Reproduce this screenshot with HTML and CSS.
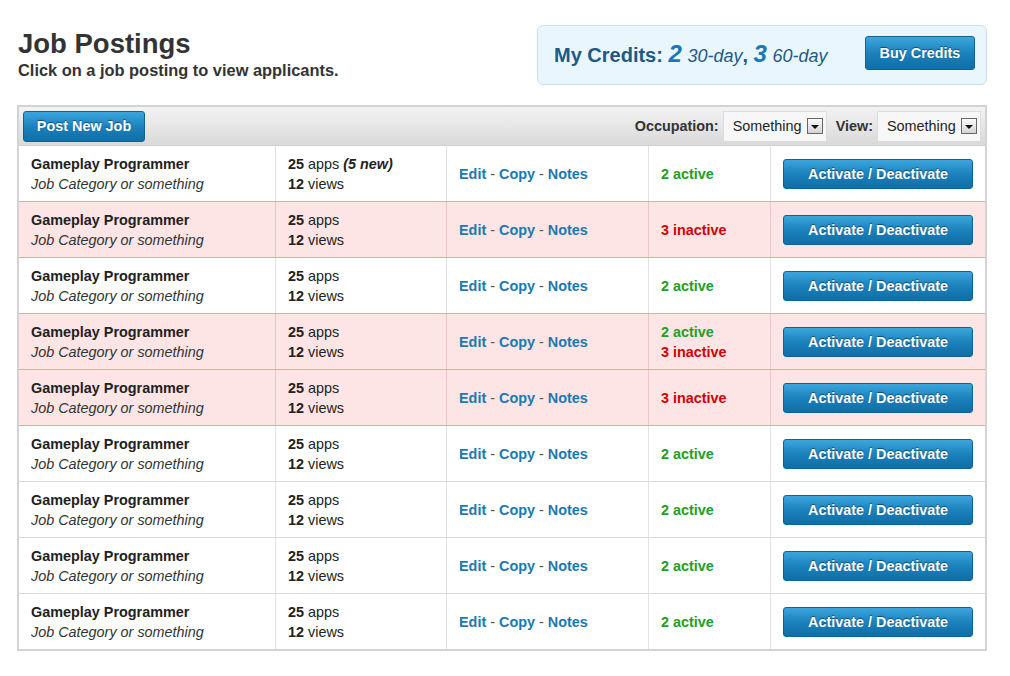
FILE: index.html
```html
<!DOCTYPE html>
<html>
<head>
<meta charset="utf-8">
<link rel="stylesheet" href="styles.css">
</head>
<body>
<div class="page">
  <div class="top">
    <div class="heading">
      <h1 class="title">Job Postings</h1>
      <p class="subtitle">Click on a job posting to view applicants.</p>
    </div>
    <div class="credits">
      <div class="credits-text">My Credits: <span class="num">2</span> <span class="unit">30-day</span>, <span class="num">3</span> <span class="unit">60-day</span></div>
      <button class="btn btn-buy">Buy Credits</button>
    </div>
  </div>

  <div class="panel">
    <div class="toolbar">
      <button class="btn btn-post">Post New Job</button>
      <div class="filters">
        <span class="flabel">Occupation:</span>
        <span class="select">Something<span class="arrow"></span></span>
        <span class="flabel">View:</span>
        <span class="select">Something<span class="arrow"></span></span>
      </div>
    </div>

    <div class="row">
      <div class="cell c1"><b>Gameplay Programmer</b><i>Job Category or something</i></div>
      <div class="cell c2"><span><b>25</b> apps <b class="new">(5 new)</b></span><span><b>12</b> views</span></div>
      <div class="cell c3"><span><a>Edit</a> - <a>Copy</a> - <a>Notes</a></span></div>
      <div class="cell c4"><span class="active">2 active</span></div>
      <div class="cell c5"><button class="btn btn-act">Activate / Deactivate</button></div>
    </div>
    <div class="row pink">
      <div class="cell c1"><b>Gameplay Programmer</b><i>Job Category or something</i></div>
      <div class="cell c2"><span><b>25</b> apps</span><span><b>12</b> views</span></div>
      <div class="cell c3"><span><a>Edit</a> - <a>Copy</a> - <a>Notes</a></span></div>
      <div class="cell c4"><span class="inactive">3 inactive</span></div>
      <div class="cell c5"><button class="btn btn-act">Activate / Deactivate</button></div>
    </div>
    <div class="row">
      <div class="cell c1"><b>Gameplay Programmer</b><i>Job Category or something</i></div>
      <div class="cell c2"><span><b>25</b> apps</span><span><b>12</b> views</span></div>
      <div class="cell c3"><span><a>Edit</a> - <a>Copy</a> - <a>Notes</a></span></div>
      <div class="cell c4"><span class="active">2 active</span></div>
      <div class="cell c5"><button class="btn btn-act">Activate / Deactivate</button></div>
    </div>
    <div class="row pink">
      <div class="cell c1"><b>Gameplay Programmer</b><i>Job Category or something</i></div>
      <div class="cell c2"><span><b>25</b> apps</span><span><b>12</b> views</span></div>
      <div class="cell c3"><span><a>Edit</a> - <a>Copy</a> - <a>Notes</a></span></div>
      <div class="cell c4"><span class="active">2 active</span><span class="inactive">3 inactive</span></div>
      <div class="cell c5"><button class="btn btn-act">Activate / Deactivate</button></div>
    </div>
    <div class="row pink">
      <div class="cell c1"><b>Gameplay Programmer</b><i>Job Category or something</i></div>
      <div class="cell c2"><span><b>25</b> apps</span><span><b>12</b> views</span></div>
      <div class="cell c3"><span><a>Edit</a> - <a>Copy</a> - <a>Notes</a></span></div>
      <div class="cell c4"><span class="inactive">3 inactive</span></div>
      <div class="cell c5"><button class="btn btn-act">Activate / Deactivate</button></div>
    </div>
    <div class="row">
      <div class="cell c1"><b>Gameplay Programmer</b><i>Job Category or something</i></div>
      <div class="cell c2"><span><b>25</b> apps</span><span><b>12</b> views</span></div>
      <div class="cell c3"><span><a>Edit</a> - <a>Copy</a> - <a>Notes</a></span></div>
      <div class="cell c4"><span class="active">2 active</span></div>
      <div class="cell c5"><button class="btn btn-act">Activate / Deactivate</button></div>
    </div>
    <div class="row">
      <div class="cell c1"><b>Gameplay Programmer</b><i>Job Category or something</i></div>
      <div class="cell c2"><span><b>25</b> apps</span><span><b>12</b> views</span></div>
      <div class="cell c3"><span><a>Edit</a> - <a>Copy</a> - <a>Notes</a></span></div>
      <div class="cell c4"><span class="active">2 active</span></div>
      <div class="cell c5"><button class="btn btn-act">Activate / Deactivate</button></div>
    </div>
    <div class="row">
      <div class="cell c1"><b>Gameplay Programmer</b><i>Job Category or something</i></div>
      <div class="cell c2"><span><b>25</b> apps</span><span><b>12</b> views</span></div>
      <div class="cell c3"><span><a>Edit</a> - <a>Copy</a> - <a>Notes</a></span></div>
      <div class="cell c4"><span class="active">2 active</span></div>
      <div class="cell c5"><button class="btn btn-act">Activate / Deactivate</button></div>
    </div>
    <div class="row">
      <div class="cell c1"><b>Gameplay Programmer</b><i>Job Category or something</i></div>
      <div class="cell c2"><span><b>25</b> apps</span><span><b>12</b> views</span></div>
      <div class="cell c3"><span><a>Edit</a> - <a>Copy</a> - <a>Notes</a></span></div>
      <div class="cell c4"><span class="active">2 active</span></div>
      <div class="cell c5"><button class="btn btn-act">Activate / Deactivate</button></div>
    </div>
  </div>
</div>
</body>
</html>
```

FILE: styles.css
```css
* { box-sizing: border-box; }
html, body { margin: 0; padding: 0; background: #fff; }
body {
  font-family: "Liberation Sans", Arial, sans-serif;
  font-size: 14.4px;
  color: #222;
}
.page {
  padding: 25px 0 0 17px;
  width: 987px;
}
.top {
  display: flex;
  justify-content: space-between;
  align-items: flex-start;
  height: 80px;
}
.heading { padding: 3px 0 0 1px; }
.title {
  margin: 0;
  font-size: 27.5px;
  line-height: 31px;
  font-weight: bold;
  color: #333;
}
.subtitle {
  margin: 0;
  padding-top: 2px;
  font-size: 16.4px;
  line-height: 19px;
  font-weight: bold;
  color: #333;
}
.credits {
  width: 450px;
  height: 60px;
  background: #eaf6fd;
  border: 1px solid #c4e2f1;
  border-radius: 6px;
  display: flex;
  align-items: center;
  justify-content: space-between;
  padding: 0 11px 0 16px;
}
.credits-text {
  font-size: 20px;
  font-weight: bold;
  color: #1d5a85;
  padding-bottom: 2px;
}
.credits-text .num {
  font-size: 24px;
  font-style: italic;
  color: #1b78b4;
}
.credits-text .unit {
  font-size: 18px;
  font-style: italic;
  font-weight: normal;
  color: #1d5a85;
}
.btn {
  font-family: "Liberation Sans", Arial, sans-serif;
  font-size: 14.4px;
  font-weight: bold;
  color: #fff;
  text-shadow: 0 -1px 1px rgba(0, 50, 90, 0.7);
  background: linear-gradient(#3ba6dc, #1a7fba 55%, #106fa6);
  border: 1px solid #0f6394;
  border-radius: 3px;
  padding: 0;
  cursor: pointer;
}
.btn-buy { width: 110px; height: 34px; margin-top: -5px; }
.panel {
  width: 970px;
  border: 2px solid #d3d3d3;
}
.toolbar {
  height: 39px;
  background: linear-gradient(#f3f3f3, #d9d9d9);
  display: flex;
  align-items: center;
  justify-content: space-between;
  padding: 0 4px 0 4px;
  border-bottom: 1px solid #d3d3d3;
}
.btn-post { width: 122px; height: 31px; }
.filters {
  display: flex;
  align-items: center;
}
.flabel {
  font-weight: bold;
  color: #333;
  margin-right: 4px;
}
.select {
  display: inline-flex;
  align-items: center;
  justify-content: space-between;
  height: 31px;
  width: 104px;
  background: #f7f7f7;
  border: 1px solid #dcdcdc;
  padding: 0 3px 0 9px;
  color: #222;
  margin-right: 9px;
}
.select:last-child { margin-right: 0; }
.arrow {
  width: 16px;
  height: 16px;
  border: 1px solid #666;
  background: linear-gradient(#fafafa, #d4d4d4);
  position: relative;
  margin-left: 3px;
  flex: none;
}
.arrow::after {
  content: "";
  position: absolute;
  left: 3px;
  top: 6px;
  border-left: 4px solid transparent;
  border-right: 4px solid transparent;
  border-top: 4px solid #111;
}
.row {
  display: grid;
  grid-template-columns: 256px 171px 202px 122px 215px;
  height: 56px;
  border-top: 1px solid #d8d8d8;
  background: #fff;
}
.toolbar + .row { border-top: 0; height: 55px; }
.row.pink {
  background: #fde5e5;
  border-top-color: #eea3a3;
}
.row.pink + .row { border-top-color: #eea3a3; }
.cell {
  display: flex;
  flex-direction: column;
  justify-content: center;
  padding: 0 12px 0 12px;
  border-left: 1px solid #e2e2e2;
  line-height: 20px;
  color: #222;
}
.cell.c1 { border-left: 0; padding-left: 12px; }
.pink .cell { border-left-color: #f4c4c4; }
.pink .cell.c1 { border-left: 0; }
.cell b { font-weight: bold; }
.c1 b { color: #222; }
.c1 i { color: #333; }
.new { font-style: italic; }
.c3 a {
  color: #1a78b2;
  font-weight: bold;
  text-decoration: none;
}
.c3 { color: #555; }
.active { color: #23a01e; font-weight: bold; }
.inactive { color: #d40000; font-weight: bold; }
.c5 { align-items: flex-start; }
.btn-act { width: 190px; height: 30px; }
```
